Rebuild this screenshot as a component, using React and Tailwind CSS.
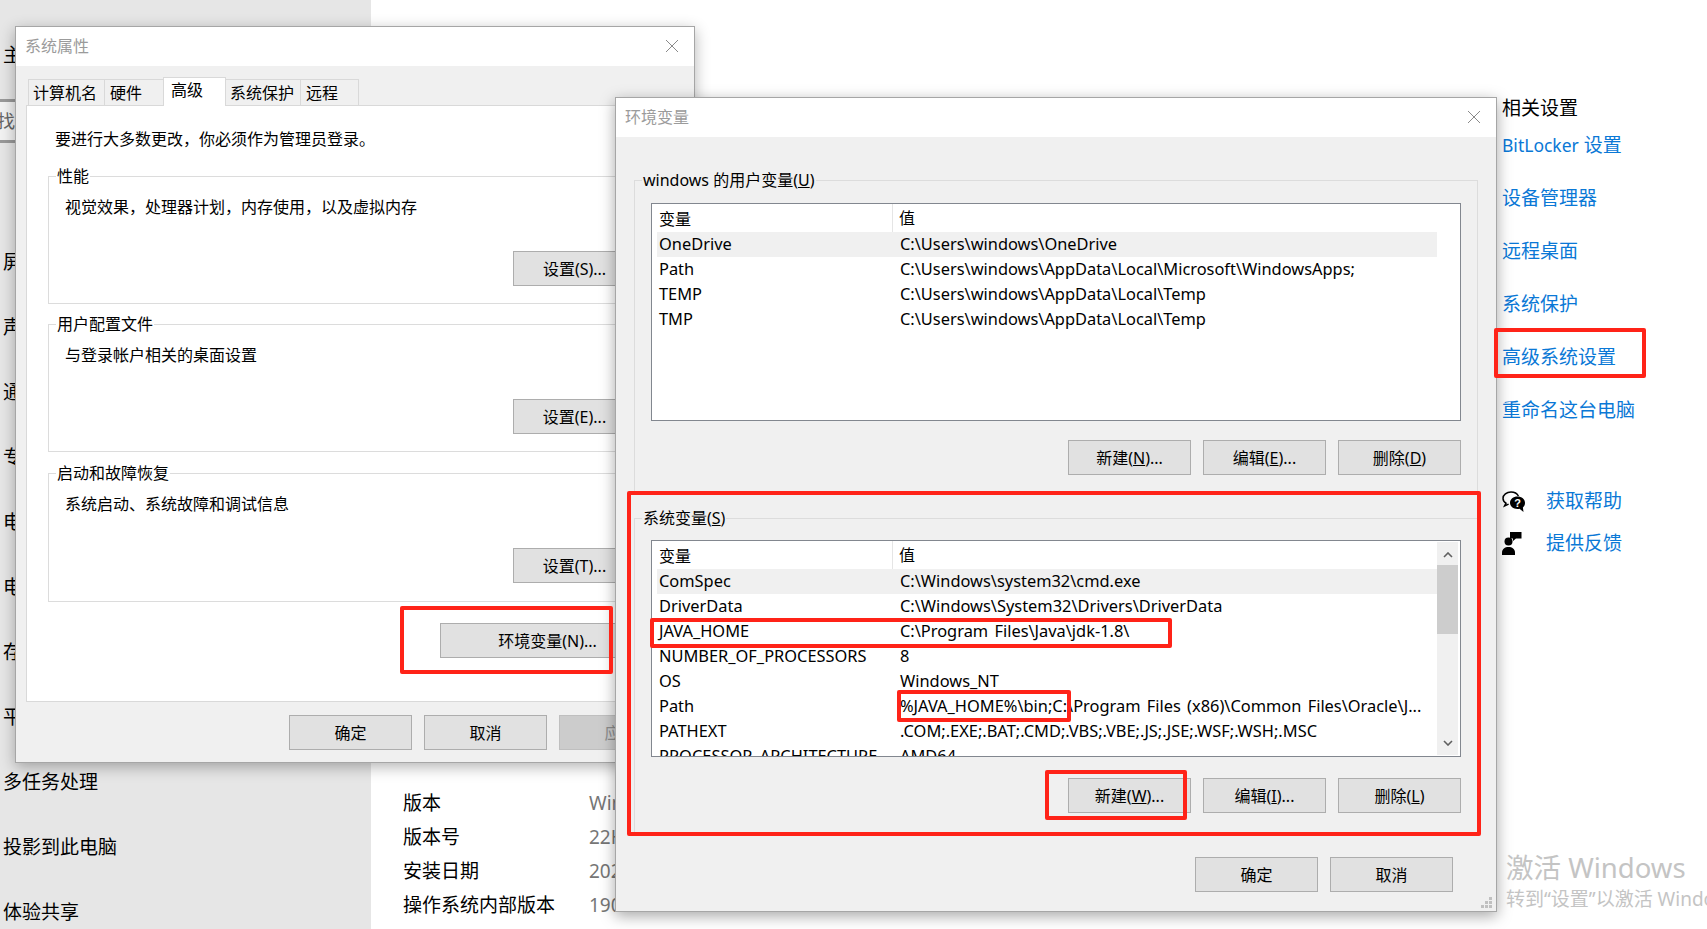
import React from 'react';

const font = { fontFamily: '"Noto Sans", "Noto Sans CJK SC", sans-serif' };

function Btn({ children, className = '' }) {
  return (
    <div className={`h-[35px] flex items-center justify-center border text-[16px] ${className || ''} ${className.includes('disabled') ? 'bg-[#cccccc] border-[#bfbfbf] text-[#8c8c8c]' : 'bg-[#e1e1e1] border-[#adadad] text-black'}`}>
      {children}
    </div>
  );
}

function Close() {
  return (
    <svg width="14" height="14" viewBox="0 0 14 14" className="text-[#8a8a8a]">
      <path d="M1 1 13 13M13 1 1 13" stroke="currentColor" strokeWidth="1" fill="none" />
    </svg>
  );
}

function TitleBar({ title }) {
  return (
    <div className="h-[39px] bg-white flex items-center justify-between pl-[9px] pr-[15px] pb-[2px] shrink-0">
      <span className="text-[16px] text-[#9b9b9b]">{title}</span>
      <Close />
    </div>
  );
}

function Group({ title, text, label, className = '' }) {
  return (
    <fieldset className={`border border-[#dcdcdc] ${className}`}>
      <legend className="ml-[7px] px-[1px] text-[16px] leading-[22px]">{title}</legend>
      <div className="mt-[9px] pl-[16px] text-[16px] leading-[22px]">{text}</div>
      <div className="mt-[33px] flex justify-end pr-[24px]">
        <Btn className="w-[123px]">{label}</Btn>
      </div>
    </fieldset>
  );
}

function SystemDialog() {
  return (
    <div className="absolute left-[15px] top-[26px] w-[680px] h-[737px] border border-[#a6a6a6] bg-[#f0f0f0] flex flex-col shadow-[0_4px_14px_rgba(0,0,0,0.3)]">
      <TitleBar title="系统属性" />
      <div className="flex-1 px-[10px]">
        <div className="h-[13px]" />
        <div className="h-[26px] flex items-end pl-[2px] text-[16px] relative z-10">
          <div className="w-[76px] h-[26px] pl-[4px] border border-[#d9d9d9] border-r-0 border-b-0 leading-[26px]">计算机名</div>
          <div className="w-[59px] h-[26px] pl-[5px] border border-[#d9d9d9] border-r-0 border-b-0 leading-[26px]">硬件</div>
          <div className="w-[63px] h-[29px] -mb-[1px] pl-[7px] bg-white border border-[#d9d9d9] border-b-0 leading-[24px]">高级</div>
          <div className="w-[74px] h-[26px] pl-[4px] border-t border-[#d9d9d9] leading-[26px]">系统保护</div>
          <div className="w-[59px] h-[26px] pl-[5px] border border-[#d9d9d9] border-b-0 leading-[26px]">远程</div>
        </div>
        <div className="h-[597px] bg-white border border-[#d9d9d9] pl-[21px] pr-[22px]">
          <div className="mt-[22px] pl-[7px] text-[16px] leading-[22px]">要进行大多数更改，你必须作为管理员登录。</div>
          <Group className="mt-[15px] h-[139px]" title="性能" text="视觉效果，处理器计划，内存使用，以及虚拟内存" label="设置(S)..." />
          <Group className="mt-[9px] h-[139px]" title="用户配置文件" text="与登录帐户相关的桌面设置" label="设置(E)..." />
          <Group className="mt-[10px] h-[140px]" title="启动和故障恢复" text="系统启动、系统故障和调试信息" label="设置(T)..." />
          <div className="mt-[21px] flex justify-end pr-[10px]">
            <Btn className="w-[211px] pl-[4px]">环境变量(N)...</Btn>
          </div>
        </div>
        <div className="mt-[13px] flex justify-end gap-[12px] pr-[2px]">
          <Btn className="w-[123px]">确定</Btn>
          <Btn className="w-[123px]">取消</Btn>
          <Btn className="w-[123px] disabled">应用</Btn>
        </div>
      </div>
    </div>
  );
}

function VarList({ rows, scroll, className = '' }) {
  return (
    <div className={`border border-[#82878f] bg-white flex overflow-hidden text-black ${className}`}>
      <div className="w-[785px] pl-[5px] shrink-0">
        <div className="h-[28px] flex items-center text-[16px]">
          <div className="w-[236px] pl-[2px] h-full leading-[30px] border-r border-[#e5e5e5]">变量</div>
          <div className="pl-[6px] leading-[30px]">值</div>
        </div>
        {rows.map(([k, v], i) => (
          <div key={k} className={`h-[25px] flex items-center whitespace-nowrap text-[16.4px] [word-spacing:2px] ${i === 0 ? 'bg-[#f0f0f0]' : ''}`}>
            <div className="w-[236px] pl-[2px]">{k}</div>
            <div className="pl-[7px]">{v}</div>
          </div>
        ))}
      </div>
      {scroll && (
        <div className="w-[21px] my-[1px] bg-[#f0f0f0] flex flex-col items-center shrink-0">
          <svg width="10" height="6" viewBox="0 0 10 6" className="mt-[10px]">
            <path d="M1 5 5 1 9 5" stroke="#606060" strokeWidth="1.6" fill="none" />
          </svg>
          <div className="w-full h-[69px] bg-[#cdcdcd] mt-[7px]" />
          <svg width="10" height="6" viewBox="0 0 10 6" className="mt-auto mb-[9px]">
            <path d="M1 1 5 5 9 1" stroke="#606060" strokeWidth="1.6" fill="none" />
          </svg>
        </div>
      )}
    </div>
  );
}

const userVars = [
  ['OneDrive', 'C:\\Users\\windows\\OneDrive'],
  ['Path', 'C:\\Users\\windows\\AppData\\Local\\Microsoft\\WindowsApps;'],
  ['TEMP', 'C:\\Users\\windows\\AppData\\Local\\Temp'],
  ['TMP', 'C:\\Users\\windows\\AppData\\Local\\Temp'],
];

const sysVars = [
  ['ComSpec', 'C:\\Windows\\system32\\cmd.exe'],
  ['DriverData', 'C:\\Windows\\System32\\Drivers\\DriverData'],
  ['JAVA_HOME', 'C:\\Program Files\\Java\\jdk-1.8\\'],
  ['NUMBER_OF_PROCESSORS', '8'],
  ['OS', 'Windows_NT'],
  ['Path', '%JAVA_HOME%\\bin;C:\\Program Files (x86)\\Common Files\\Oracle\\J...'],
  ['PATHEXT', '.COM;.EXE;.BAT;.CMD;.VBS;.VBE;.JS;.JSE;.WSF;.WSH;.MSC'],
  ['PROCESSOR_ARCHITECTURE', 'AMD64'],
];

function EnvDialog() {
  return (
    <div className="absolute left-[615px] top-[97px] w-[882px] h-[815px] border border-[#a6a6a6] bg-[#f0f0f0] flex flex-col shadow-[0_4px_14px_rgba(0,0,0,0.35)]">
      <TitleBar title="环境变量" />
      <div className="flex-1 pl-[18px] pr-[18px] relative">
        <fieldset className="mt-[32px] h-[326px] border border-[#dcdcdc] pl-[16px] pr-[16px]">
          <legend className="-ml-[9px] px-[1px] text-[16px] leading-[22px]">
            windows 的用户变量(<u>U</u>)
          </legend>
          <VarList className="mt-[12px] h-[218px]" rows={userVars} />
          <div className="mt-[19px] flex justify-end gap-[12px]">
            <Btn className="w-[123px]">新建(<u>N</u>)...</Btn>
            <Btn className="w-[123px]">编辑(<u>E</u>)...</Btn>
            <Btn className="w-[123px]">删除(<u>D</u>)</Btn>
          </div>
        </fieldset>
        <fieldset className="mt-[12px] h-[327px] border border-[#dcdcdc] pl-[16px] pr-[16px]">
          <legend className="-ml-[9px] px-[1px] text-[16px] leading-[22px]">
            系统变量(<u>S</u>)
          </legend>
          <VarList className="mt-[11px] h-[217px]" rows={sysVars} scroll />
          <div className="mt-[21px] flex justify-end gap-[12px]">
            <Btn className="w-[123px]">新建(<u>W</u>)...</Btn>
            <Btn className="w-[123px]">编辑(<u>I</u>)...</Btn>
            <Btn className="w-[123px]">删除(<u>L</u>)</Btn>
          </div>
        </fieldset>
        <div className="mt-[23px] flex justify-end gap-[12px] pr-[25px]">
          <Btn className="w-[123px]">确定</Btn>
          <Btn className="w-[123px]">取消</Btn>
        </div>
        <svg width="12" height="12" viewBox="0 0 12 12" className="absolute right-[3px] bottom-[2px]" fill="#c0c0c0">
          <rect x="8" y="0" width="3" height="3" />
          <rect x="4" y="4" width="3" height="3" />
          <rect x="8" y="4" width="3" height="3" />
          <rect x="0" y="8" width="3" height="3" />
          <rect x="4" y="8" width="3" height="3" />
          <rect x="8" y="8" width="3" height="3" />
        </svg>
      </div>
    </div>
  );
}

function Sidebar() {
  const items = ['屏幕', '声音', '通知和操作', '专注助手', '电源和睡眠', '电池', '存储', '平板电脑', '多任务处理', '投影到此电脑', '体验共享'];
  return (
    <aside className="w-[371px] h-full bg-[#e6e6e6] shrink-0 pl-[3px] text-[19px] text-black">
      <div className="pt-[42px] h-[99px] leading-[27px]">主页</div>
      <div className="-ml-[3px] h-[44px] border-y-[3px] border-[#999999] bg-[#f2f2f2] text-[#666666] leading-[38px] text-[18px] -indent-[3px]">找设置</div>
      <div className="mt-[106px] flex flex-col gap-[37.5px]">
        {items.map((t) => (
          <div key={t} className="leading-[27.5px]">{t}</div>
        ))}
      </div>
    </aside>
  );
}

function AboutInfo() {
  const rows = [
    ['版本', 'Windows 10 专业版'],
    ['版本号', '22H2'],
    ['安装日期', '2021/10/12'],
    ['操作系统内部版本', '19045.3324'],
  ];
  return (
    <main className="flex-1 pl-[32px] pt-[786px]">
      {rows.map(([k, v]) => (
        <div key={k} className="h-[34px] flex items-center text-[19px]">
          <div className="w-[186px] shrink-0">{k}</div>
          <div className="text-[#767676] whitespace-nowrap">{v}</div>
        </div>
      ))}
    </main>
  );
}

function HelpIcon() {
  return (
    <svg width="24" height="22" viewBox="0 0 24 22">
      <path d="M9 1C4.6 1 1 3.8 1 7.3c0 2 1.2 3.8 3 4.9L2.6 15l4-1.9" fill="none" stroke="#000" strokeWidth="1.5" />
      <path d="M9 1c3.4 0 6.2 1.6 7.4 4" fill="none" stroke="#000" strokeWidth="1.5" />
      <path d="M15.5 5.5c-4.2 0-7.5 2.7-7.5 6.2s3.3 6.2 7.5 6.2c.9 0 1.3 0 2-.2L21.5 21l-.6-4.5c1.4-1.2 2.1-2.9 2.1-4.8 0-3.5-3.3-6.2-7.5-6.2z" fill="#000" />
      <text x="15.5" y="15.8" textAnchor="middle" fontSize="11" fontWeight="700" fill="#fff" fontFamily="Liberation Sans">?</text>
    </svg>
  );
}

function FeedbackIcon() {
  return (
    <svg width="20" height="23" viewBox="0 0 20 23">
      <circle cx="6.5" cy="9.5" r="4" fill="#000" />
      <path d="M0 23v-2.5C0 17 3 15 6.5 15S13 17 13 20.5V23z" fill="#000" />
      <path d="M8 0h11.5v6.5H14L11 9V6.5H8z" fill="#000" />
    </svg>
  );
}

function RightRail() {
  const links = [<><span className="text-[17.5px]">BitLocker</span> 设置</>, '设备管理器', '远程桌面', '系统保护', '高级系统设置', '重命名这台电脑'];
  return (
    <section className="w-[205px] shrink-0 pt-[95px] text-[19px]">
      <div className="leading-[26px] text-black">相关设置</div>
      <div className="mt-[11px] flex flex-col gap-[26.5px] text-[#0a78d6] leading-[26.5px]">
        {links.map((t, i) => (
          <div key={i} className="whitespace-nowrap">{t}</div>
        ))}
      </div>
      <div className="mt-[66px] flex items-center h-[24px] text-[#0a78d6]">
        <div className="w-[44px] shrink-0"><HelpIcon /></div>获取帮助
      </div>
      <div className="mt-[18px] flex items-center h-[24px] text-[#0a78d6]">
        <div className="w-[44px] shrink-0"><FeedbackIcon /></div>提供反馈
      </div>
    </section>
  );
}

// annotation rectangles drawn over the screenshot
const marks = [
  'left-[400px] top-[606px] w-[213px] h-[68px]',
  'left-[627px] top-[491px] w-[854px] h-[345px]',
  'left-[650px] top-[618px] w-[522px] h-[30px]',
  'left-[897px] top-[690px] w-[174px] h-[32px]',
  'left-[1045px] top-[770px] w-[142px] h-[50px]',
  'left-[1494px] top-[328px] w-[152px] h-[50px]',
];

export default function App() {
  return (
    <div className="relative w-[1707px] h-[929px] overflow-hidden bg-white flex" style={font}>
      <Sidebar />
      <AboutInfo />
      <RightRail />
      <SystemDialog />
      <EnvDialog />
      {marks.map((m) => (
        <div key={m} className={`absolute border-[4px] border-[#ff2318] rounded-[2px] ${m}`} />
      ))}
      <div className="absolute left-[1506px] top-[850px] whitespace-nowrap text-[#c4c4c4]">
        <div className="text-[27.5px] leading-[36px]">激活 Windows</div>
        <div className="text-[19px] leading-[26px]">转到“设置”以激活 Windows。</div>
      </div>
    </div>
  );
}
